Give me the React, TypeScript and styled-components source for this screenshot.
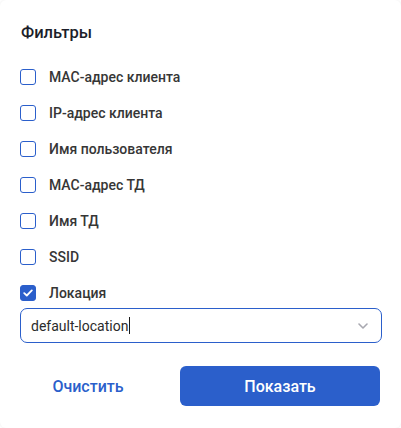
import styled, { createGlobalStyle } from "styled-components";

const GlobalStyle = createGlobalStyle`
  html, body {
    margin: 0;
    padding: 0;
    background: #ffffff;
  }
  body {
    font-family: Roboto, Inter, "Liberation Sans", sans-serif;
    color: #2b2b2b;
  }
`;

const Panel = styled.div`
  background: #ffffff;
  border-radius: 6px;
  box-shadow: 0 0 3px rgba(0, 0, 0, 0.08);
  box-sizing: border-box;
  display: flex;
  flex-direction: column;
  height: 428px;
  padding: 21px 19px 0 20px;
  width: 401px;
`;

const Title = styled.h3`
  color: #1c1e2a;
  font-size: 16.5px;
  font-weight: 500;
  line-height: 24px;
  margin: 0 0 17px 1px;
`;

const FilterList = styled.div`
  display: flex;
  flex-direction: column;
  gap: 6px;
`;

const Row = styled.label`
  align-items: center;
  cursor: pointer;
  display: flex;
  gap: 13px;
  height: 30px;
`;

const Box = styled.span<{ checked: boolean }>`
  align-items: center;
  background: ${({ checked }) => (checked ? "#2b5fcb" : "#ffffff")};
  border: 1.5px solid #2b5fcb;
  border-radius: 3px;
  box-sizing: border-box;
  display: flex;
  flex-shrink: 0;
  height: 16px;
  justify-content: center;
  width: 16px;
`;

const LabelText = styled.span`
  color: #363636;
  font-size: 14px;
  font-weight: 500;
  line-height: 20px;
`;

const SelectBox = styled.div`
  align-items: center;
  border: 1px solid #2b5fcb;
  border-radius: 7px;
  box-sizing: border-box;
  display: flex;
  height: 35px;
  padding: 0 13px 0 10px;
`;

const SelectValue = styled.span`
  color: #2b2b2b;
  flex: 1;
  font-size: 14px;
  line-height: 20px;
`;

const Caret = styled.span`
  background: #1a1a1a;
  display: inline-block;
  height: 17px;
  margin-left: 1px;
  vertical-align: -3px;
  width: 1px;
`;

const Actions = styled.div`
  display: flex;
  gap: 24px;
  margin: 23px 2px 0 0;
`;

const ClearButton = styled.button`
  background: none;
  border: none;
  color: #2b5fcb;
  cursor: pointer;
  flex: 1;
  font-family: inherit;
  font-size: 16px;
  font-weight: 500;
  height: 40px;
  padding: 0;
`;

const ShowButton = styled.button`
  background: #2b5fcb;
  border: none;
  border-radius: 6px;
  color: #ffffff;
  cursor: pointer;
  font-family: inherit;
  font-size: 16px;
  font-weight: 500;
  height: 40px;
  padding: 0;
  width: 200px;
`;

const filters = [
  { label: "MAC-адрес клиента", checked: false },
  { label: "IP-адрес клиента", checked: false },
  { label: "Имя пользователя", checked: false },
  { label: "MAC-адрес ТД", checked: false },
  { label: "Имя ТД", checked: false },
  { label: "SSID", checked: false },
  { label: "Локация", checked: true },
];

function Check({ checked }: { checked: boolean }) {
  return (
    <Box checked={checked}>
      {checked && (
        <svg width="10" height="8" viewBox="0 0 10 8" fill="none">
          <path
            d="M1.2 4.1L3.8 6.5L8.8 1.4"
            stroke="#ffffff"
            strokeWidth="1.8"
            strokeLinecap="round"
            strokeLinejoin="round"
          />
        </svg>
      )}
    </Box>
  );
}

export default function App() {
  return (
    <>
      <GlobalStyle />
      <Panel>
        <Title>Фильтры</Title>
        <FilterList>
          {filters.map((f) => (
            <Row key={f.label}>
              <Check checked={f.checked} />
              <LabelText>{f.label}</LabelText>
            </Row>
          ))}
        </FilterList>
        <SelectBox>
          <SelectValue>
            default-location
            <Caret />
          </SelectValue>
          <svg width="10" height="6" viewBox="0 0 10 6" fill="none">
            <path
              d="M1 1L5 5L9 1"
              stroke="#a8a8b0"
              strokeWidth="1.6"
              strokeLinecap="round"
              strokeLinejoin="round"
            />
          </svg>
        </SelectBox>
        <Actions>
          <ClearButton>Очистить</ClearButton>
          <ShowButton>Показать</ShowButton>
        </Actions>
      </Panel>
    </>
  );
}
